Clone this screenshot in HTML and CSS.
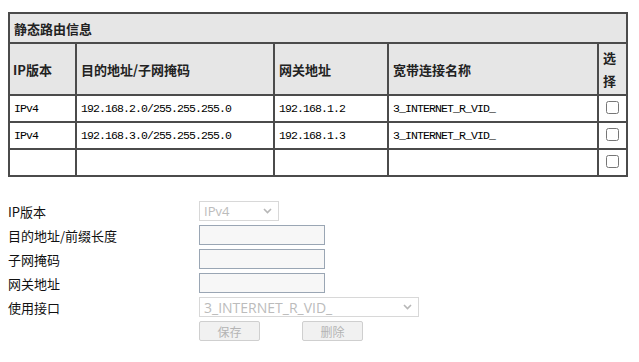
FILE: index.html
```html
<!DOCTYPE html>
<html lang="zh-CN">
<head>
  <meta charset="UTF-8">
  <title>静态路由</title>
  <link rel="stylesheet" href="styles.css">
</head>
<body>

<table class="route-table">
  <colgroup>
    <col class="c-ver">
    <col class="c-dest">
    <col class="c-gw">
    <col class="c-wan">
    <col class="c-sel">
  </colgroup>
  <tr class="title-row">
    <td colspan="5">静态路由信息</td>
  </tr>
  <tr class="head-row">
    <td>IP版本</td>
    <td>目的地址/子网掩码</td>
    <td>网关地址</td>
    <td>宽带连接名称</td>
    <td>选择</td>
  </tr>
  <tr class="data-row">
    <td>IPv4</td>
    <td>192.168.2.0/255.255.255.0</td>
    <td>192.168.1.2</td>
    <td>3_INTERNET_R_VID_</td>
    <td class="chk"><input type="checkbox"></td>
  </tr>
  <tr class="data-row">
    <td>IPv4</td>
    <td>192.168.3.0/255.255.255.0</td>
    <td>192.168.1.3</td>
    <td>3_INTERNET_R_VID_</td>
    <td class="chk"><input type="checkbox"></td>
  </tr>
  <tr class="data-row">
    <td></td>
    <td></td>
    <td></td>
    <td></td>
    <td class="chk"><input type="checkbox"></td>
  </tr>
</table>

<div class="route-form">
  <label>IP版本</label>
  <div><select class="sel-small" disabled><option>IPv4</option></select></div>

  <label>目的地址/前缀长度</label>
  <div><input type="text" class="txt" disabled></div>

  <label>子网掩码</label>
  <div><input type="text" class="txt" disabled></div>

  <label>网关地址</label>
  <div><input type="text" class="txt" disabled></div>

  <label>使用接口</label>
  <div><select class="sel-wide" disabled><option>3_INTERNET_R_VID_</option></select></div>

  <span></span>
  <div class="btns">
    <button disabled>保存</button>
    <button disabled>删除</button>
  </div>
</div>

</body>
</html>
```

FILE: styles.css
```css
* {
  box-sizing: border-box;
}

body {
  margin: 0;
  padding: 12px 8px;
  background: #fff;
  color: #000;
  font-family: "Liberation Mono", "Noto Sans CJK SC", monospace;
}

/* route list */
.route-table {
  width: 618px;
  table-layout: fixed;
  border-collapse: collapse;
  border: 2px solid #4b4b4b;
}

.c-ver  { width: 67px; }
.c-dest { width: 198px; }
.c-gw   { width: 114px; }
.c-wan  { width: 210px; }
.c-sel  { width: 29px; }

.route-table td {
  border: 2px solid #4b4b4b;
  padding: 0 4px;
  text-align: left;
  vertical-align: middle;
}

.title-row td {
  height: 30px;
  background: #e6e6e6;
  font-family: "Noto Sans CJK SC", sans-serif;
  font-weight: bold;
  font-size: 13px;
  color: #222;
}

.head-row td {
  height: 52px;
  background: #e6e6e6;
  font-family: "Noto Sans CJK SC", sans-serif;
  font-weight: bold;
  font-size: 13px;
  line-height: 23px;
  color: #222;
}

.head-row td:first-child {
  padding-left: 3px;
}

.data-row td {
  height: 27px;
  font-size: 11.5px;
  letter-spacing: -0.9px;
  padding-left: 4px;
}

.route-table td.chk {
  padding: 0;
  text-align: center;
}

.chk input {
  margin: 1px 0 0 0;
  width: 13px;
  height: 13px;
}

/* edit form */
.route-form {
  display: grid;
  grid-template-columns: 191px auto;
  grid-auto-rows: 24px;
  margin-top: 22px;
  align-items: center;
}

.route-form label {
  font-family: "Noto Sans CJK SC", sans-serif;
  font-size: 13px;
  color: #111;
}

.route-form select,
.route-form input,
.route-form button {
  display: block;
  height: 20px;
  margin: 0;
  font-family: "Open Sans", "Noto Sans CJK SC", sans-serif;
}

select {
  -webkit-appearance: none;
  appearance: none;
  background: #fff url("data:image/svg+xml,%3Csvg xmlns='http://www.w3.org/2000/svg' width='9' height='6'%3E%3Cpath d='M1 1l3.5 3.5L8 1' fill='none' stroke='%23999' stroke-width='1.6'/%3E%3C/svg%3E") no-repeat right 6px center;
  border: 1px solid #c8c8c8;
  color: #a0a0a0;
  padding: 0 4px;
  border-radius: 0;
}

.sel-small {
  width: 80px;
  font-size: 13px;
}

.sel-wide {
  width: 220px;
  font-size: 14px;
}

.txt {
  width: 126px;
  border: 1px solid #9aa6b4;
  background: #f7f7f7;
}

.btns {
  display: flex;
  gap: 42px;
}

.btns button {
  width: 61px;
  background: #f1f1f1;
  border: 1px solid #cfcfcf;
  border-radius: 2px;
  color: #b4b4b4;
  font-family: "Noto Sans CJK SC", sans-serif;
  font-size: 12px;
  padding: 0;
}
```
